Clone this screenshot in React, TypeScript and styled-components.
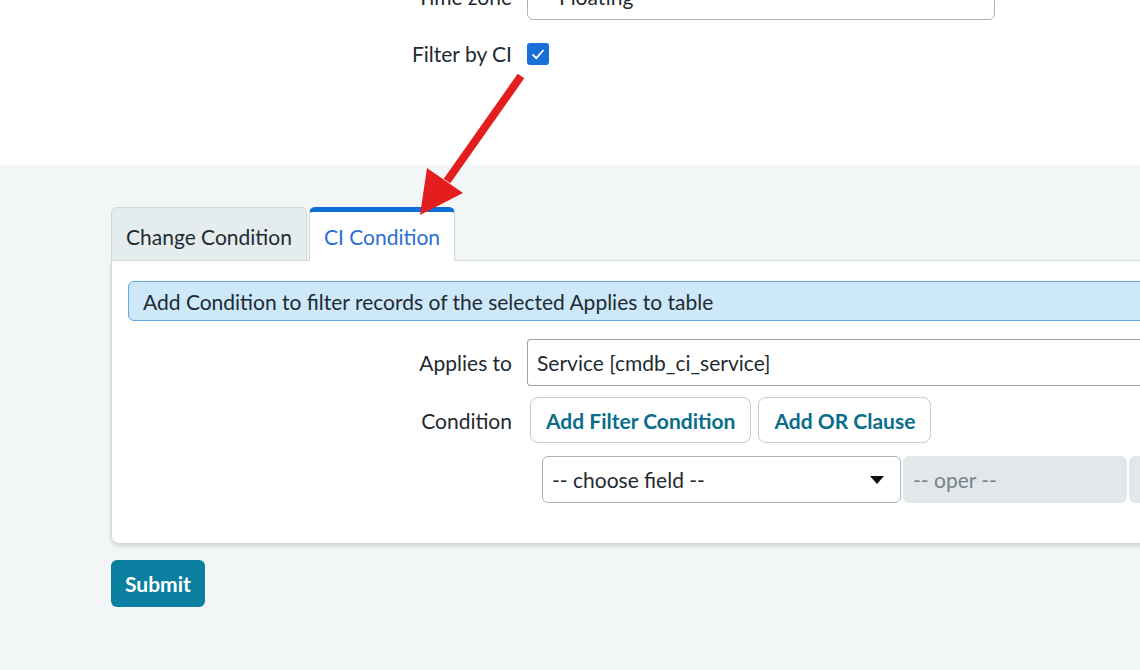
import styled, { createGlobalStyle } from 'styled-components';

const GlobalStyle = createGlobalStyle`
  html, body {
    margin: 0;
    padding: 0;
    background: #ffffff;
    font-family: Lato, "Open Sans", "Liberation Sans", sans-serif;
    color: #1f2b31;
    overflow: hidden;
  }
  * {
    box-sizing: border-box;
  }
`;

const Page = styled.div`
  position: relative;
  width: 1140px;
  height: 670px;
  overflow: hidden;
  display: flex;
  flex-direction: column;
`;

const TopForm = styled.div`
  height: 192px;
  flex-shrink: 0;
  background: #ffffff;
  display: flex;
  flex-direction: column;
  gap: 21px;
  margin-top: -27px;
`;

const FieldRow = styled.div<{ $labelWidth?: number }>`
  display: grid;
  grid-template-columns: ${p => p.$labelWidth ?? 512}px 1fr;
  column-gap: 15px;
  align-items: center;
`;

const Label = styled.label`
  font-size: 21px;
  text-align: right;
  color: #1f2b31;
`;

const TopSelect = styled.div`
  width: 468px;
  height: 47px;
  border: 1px solid #a9b4b9;
  border-radius: 6px;
  display: flex;
  align-items: center;
  justify-content: space-between;
  padding: 0 14px 0 10px;
  font-size: 21px;
  color: #1f2b31;
`;

const Checkbox = styled.span`
  width: 22px;
  height: 22px;
  border-radius: 3px;
  background: #1a6fd6;
  display: flex;
  align-items: center;
  justify-content: center;
`;

const Lower = styled.div`
  flex: 1;
  background: #f3f6f7;
  padding: 42px 0 0 111px;
`;

const TabBar = styled.div`
  display: flex;
  gap: 2px;
  align-items: flex-end;
  position: relative;
  z-index: 1;
  margin-bottom: -1px;
`;

const Tab = styled.div<{ $active?: boolean }>`
  height: 54px;
  padding: 0 14px;
  display: flex;
  align-items: center;
  font-size: 21px;
  border: 1px solid #cfd7d9;
  border-top: ${p => (p.$active ? '5px solid #0b6fd8' : '1px solid #cfd7d9')};
  border-bottom: ${p => (p.$active ? '1px solid #ffffff' : '1px solid #cfd7d9')};
  border-radius: 6px 6px 0 0;
  background: ${p => (p.$active ? '#ffffff' : '#e5ecee')};
  color: ${p => (p.$active ? '#2b6fd2' : '#1f2b31')};
  padding-top: ${p => (p.$active ? '0' : '4px')};
`;

const Panel = styled.div`
  width: 1100px;
  height: 284px;
  background: #ffffff;
  border: 1px solid #d3dadc;
  border-radius: 0 0 0 8px;
  box-shadow: 0 2px 4px rgba(0, 0, 0, 0.14);
  padding: 20px 16px;
  display: flex;
  flex-direction: column;
`;

const InfoBar = styled.div`
  height: 40px;
  background: #cce8f9;
  border: 1px solid #62a8de;
  border-radius: 6px;
  display: flex;
  align-items: center;
  padding: 0 14px;
  font-size: 21px;
  color: #1f2b31;
  margin-bottom: 18px;
`;

const PanelRows = styled.div`
  display: flex;
  flex-direction: column;
  gap: 11px;
`;

const TextInput = styled.div`
  height: 47px;
  border: 1px solid #97a5ab;
  border-right: none;
  border-radius: 4px 0 0 4px;
  display: flex;
  align-items: center;
  padding: 0 9px;
  font-size: 21px;
  color: #1f2b31;
`;

const ButtonGroup = styled.div`
  display: flex;
  gap: 7px;
  margin-left: 3px;
`;

const OutlineButton = styled.button`
  height: 46px;
  padding: 0 15px;
  background: #ffffff;
  border: 1px solid #c4cdd1;
  border-radius: 8px;
  font-family: inherit;
  font-size: 21px;
  font-weight: 700;
  color: #0a6e8a;
`;

const FilterRow = styled.div`
  display: flex;
  gap: 2px;
  margin: 2px 0 0 414px;
`;

const FieldSelect = styled.div<{ $width: number; $disabled?: boolean }>`
  width: ${p => p.$width}px;
  flex-shrink: 0;
  height: 47px;
  border: 1px solid ${p => (p.$disabled ? '#e2e8ea' : '#a9b4b9')};
  border-radius: 6px;
  background: ${p => (p.$disabled ? '#e2e8ea' : '#ffffff')};
  display: flex;
  align-items: center;
  justify-content: space-between;
  padding: 0 16px 0 9px;
  font-size: 21px;
  color: ${p => (p.$disabled ? '#76838a' : '#1f2b31')};
`;

const Caret = styled.span`
  width: 0;
  height: 0;
  border-left: 7px solid transparent;
  border-right: 7px solid transparent;
  border-top: 8px solid #111111;
`;

const SubmitButton = styled.button`
  margin-top: 16px;
  height: 47px;
  padding: 0 14px;
  border: none;
  border-radius: 6px;
  background: #0a7fa0;
  color: #ffffff;
  font-family: inherit;
  font-size: 21px;
  font-weight: 700;
`;

const ArrowLayer = styled.svg`
  position: absolute;
  left: 0;
  top: 0;
  pointer-events: none;
  z-index: 5;
`;

const App = () => (
  <>
    <GlobalStyle />
    <Page>
      <TopForm>
        <FieldRow>
          <Label>Time zone</Label>
          <TopSelect>
            <span>-- Floating --</span>
            <svg width="12" height="8" viewBox="0 0 12 8">
              <path d="M1 1l5 5 5-5" fill="none" stroke="#333" strokeWidth="1.6" />
            </svg>
          </TopSelect>
        </FieldRow>
        <FieldRow>
          <Label>Filter by CI</Label>
          <Checkbox>
            <svg width="14" height="12" viewBox="0 0 14 12">
              <path d="M1.5 6.5l3.8 3.6L12.5 2" fill="none" stroke="#fff" strokeWidth="1.8" />
            </svg>
          </Checkbox>
        </FieldRow>
      </TopForm>

      <Lower>
        <TabBar>
          <Tab>Change Condition</Tab>
          <Tab $active>CI Condition</Tab>
        </TabBar>
        <Panel>
          <InfoBar>Add Condition to filter records of the selected Applies to table</InfoBar>
          <PanelRows>
            <FieldRow $labelWidth={384}>
              <Label>Applies to</Label>
              <TextInput>Service [cmdb_ci_service]</TextInput>
            </FieldRow>
            <FieldRow $labelWidth={384}>
              <Label>Condition</Label>
              <ButtonGroup>
                <OutlineButton>Add Filter Condition</OutlineButton>
                <OutlineButton>Add OR Clause</OutlineButton>
              </ButtonGroup>
            </FieldRow>
            <FilterRow>
              <FieldSelect $width={359}>
                <span>-- choose field --</span>
                <Caret />
              </FieldSelect>
              <FieldSelect $width={224} $disabled>
                <span>-- oper --</span>
              </FieldSelect>
              <FieldSelect $width={200} $disabled>
                <span>-- value --</span>
              </FieldSelect>
            </FilterRow>
          </PanelRows>
        </Panel>
        <SubmitButton>Submit</SubmitButton>
      </Lower>

      {/* red callout arrow pointing at the CI Condition tab */}
      <ArrowLayer width="1140" height="670" viewBox="0 0 1140 670">
        <line x1="521" y1="76" x2="447" y2="181" stroke="#e41e1e" strokeWidth="8" />
        <polygon points="420,215 427,168 463,193" fill="#e41e1e" />
      </ArrowLayer>
    </Page>
  </>
);

export default App;
